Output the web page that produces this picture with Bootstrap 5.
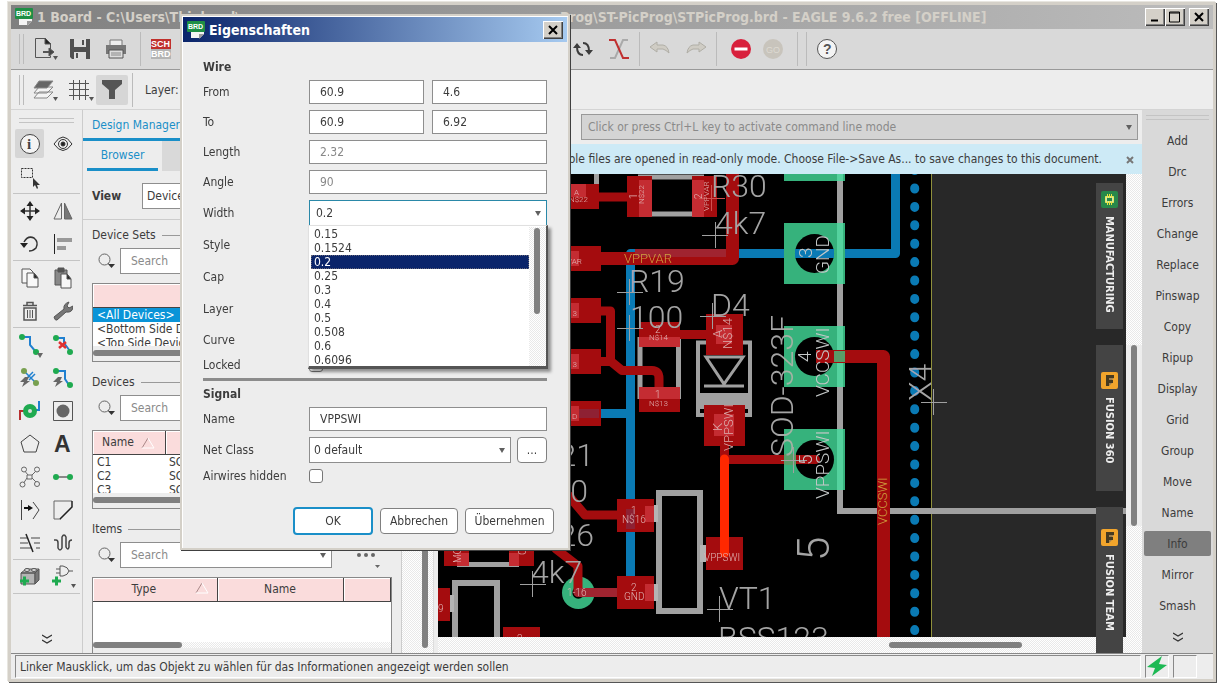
<!DOCTYPE html>
<html lang="de">
<head>
<meta charset="utf-8">
<meta name="viewport" content="width=device-width, initial-scale=1">
<title>1 Board - EAGLE 9.6.2 free</title>
<link href="https://cdn.jsdelivr.net/npm/bootstrap@5.3.0/dist/css/bootstrap.min.css" rel="stylesheet">
<style>
:root{--ui:"DejaVu Sans Condensed","DejaVu Sans","Noto Sans",sans-serif;--face:#ededed;--tone:#d9d9d9;--frame:#d4d0c8;--accent:#1a8fc8}
body{font-family:var(--ui);font-size:12px;line-height:14px;color:#3c3c3c;background:#fff}
button,input,select{font:inherit;color:inherit}
button{padding:0;border:0;background:none}
.screen{height:100vh;min-height:600px;padding:2px 9px 7px 8px}
.win{background:var(--face);border:3px solid var(--frame);box-shadow:1px 1px 0 #555,-1px -1px 0 #e8e6e0}
.caption{height:24px;font-size:14px;font-weight:700;line-height:24px;background:linear-gradient(90deg,#808080,#bcbcbc);color:#d4d0c8;white-space:pre}
.cap-left{width:523px;flex:none;overflow:hidden}
.winbtn{width:20px;height:18px;background:var(--frame);box-shadow:inset 1px 1px #fff,inset -1px -1px #404040,inset -2px -2px #808080;display:grid;place-items:center;flex:none}
.bar1{height:41px;background:var(--tone);border-bottom:1px solid #999}
.bar2{height:40px;border-bottom:1px solid #d4d4d4}
.grip{width:5px;height:30px;border:solid #bbb;border-width:0 1px;flex:none}
.vsep{width:1px;height:34px;background:#bbb;flex:none}
.tb{width:32px;height:30px;flex:none;display:grid;place-items:center}
.on{background:#d6d6d6;border-radius:2px}
.bar-left{width:556px;flex:none;overflow:hidden}
.tools{width:72px;flex:none;border-right:1px solid #ccc}
.grip-h{height:5px;border:solid #c4c4c4;border-width:1px 0;flex:none}
.pair{display:grid;grid-template-columns:33px 33px;grid-auto-rows:33px;border-bottom:1px solid #c4c4c4;margin:0 2px}
.pair button{display:grid;place-items:center}
.pair .on{margin:2px}
.manager{width:355px;flex:none;overflow:hidden}
.tabline{height:31px;border-bottom:3px solid var(--accent);color:var(--accent);padding:8px 9px 0}
.subtabs{height:31px;padding-left:4px}
.subtabs button{width:71px;height:30px}
.subtabs .cur{color:var(--accent);border-bottom:3px solid var(--accent)}
.subtabs .oth{background:var(--tone);color:#777;margin-left:4px;width:70px}
.viewrow{height:48px;border-bottom:1px solid #ccc;padding-left:9px}
.viewrow label{width:50px}
.pick{position:relative;display:block}
.pick select,.field{appearance:none;width:100%;border:1px solid #8e8e8e;border-radius:0;background:#fff;height:24px;padding:0 10px;display:block;outline:0}
.pick select{height:26px;padding:0 20px 0 4px}
.pick:after{content:"";border:solid transparent;border-width:5px 3px 0;border-top-color:#606060;width:0;height:0;position:absolute;right:6px;top:11px}
.groups{width:319px;flex:none;overflow:hidden;border-right:1px solid #ccc}
.siderail{width:32px;flex:none;border-right:1px solid #ddd;padding:3px 5px 5px 20px}
.siderail div{width:6px;height:100%;border-radius:3px;background:#808080}
.group{padding:6px 0 0 9px;height:147px;flex:none}
.legend2{height:18px;margin:0;font-size:12px;font-weight:400;line-height:14px}
.legend2:after{content:"";height:1px;background:#999;width:230px;margin-left:6px}
.seek{height:26px;margin-top:4px}
.seek .field{height:26px;width:212px}
.seek .field::placeholder,.cmd::placeholder{color:#8a8a8a;opacity:1}
.seek .glass{width:28px;padding-left:6px}
.listing{width:300px;height:79px;margin-top:9px;border:1px solid #888;background:var(--face);overflow:hidden}
.listing table{width:298px;table-layout:fixed;border-collapse:collapse;background:#fff;line-height:14px}
.listing th{background:#fadcdc;height:23px;border-right:1px solid #444;border-bottom:1px solid #444;font-weight:400;text-align:center;padding:0;box-shadow:inset 1px 1px #fff}
.listing td{padding:0 4px;height:14px;white-space:nowrap;overflow:hidden}
.listing .blank{height:41px}
.listing .clip{max-height:62px;overflow:hidden;background:#fff}
.w72{width:72px}.w124{width:124px}.w126{width:126px}
.hbar{height:6px;background:#808080;border-radius:3px;width:100%}
.picked{background:#0a94d8;color:#fff}
.center{min-width:0}
.cmdrow{height:34px;padding:4px 4px 0 143px}
.cmdrow .pick{height:26px}
.cmd{width:100%;height:26px;background:#d4d4d4;border:1px solid #999;padding:0 6px;outline:0}
.notice{height:30px;background:#cdeaf6;margin:0}
.hatch{background:repeating-conic-gradient(#fff 0 25%,#e9e9e9 0 50%) 0 0/2px 2px}
.low{min-height:0}
.sheet{min-height:0;min-width:0;background:#000}
.sheet svg{display:block;width:100%;height:100%}
.vscroll{width:16px;flex:none}
.hscroll{height:16px;flex:none}
.docks{position:absolute;right:19px;top:73px;width:27px}
.docks button{width:27px;height:146px;background:#444;color:#eee;writing-mode:vertical-rl;font-size:11px;line-height:27px;font-weight:700;display:flex;align-items:center;gap:8px}
.menu{width:71px;flex:none;background:var(--tone);overflow:hidden;padding-top:1px}
.menu button{height:25px;margin:0 2px;border-radius:2px}
.menu .hot{background:#7f7f7f}
.gap6{gap:6px}
.status{height:26px;border-top:1px solid #888;flex:none;padding:1px 0}
.cell{border:1px solid;border-color:#888 #fff #fff #888}
.cell-end{width:24px}
.dlg{position:absolute;left:180px;top:14px;width:390px;border:2px solid var(--frame);background:var(--face);box-shadow:inset 1px 1px #fff,1px 1px 0 #404040}
.dlg .caption{height:25px;margin:1px;background:linear-gradient(90deg,#0a246a,#a6caf0);color:#fff}
.form-a{display:grid;grid-template-columns:106px 1fr;row-gap:6px;padding:17px 21px 0;align-items:center}
.form-a h2{grid-column:1/3;font-size:12px;font-weight:700;line-height:14px;margin:0}
.form-a hr{grid-column:1/3;height:3px;background:#8c8c8c;border:0;opacity:1;margin:0}
.form-a .field{min-width:0}
.form-a .dim{color:#888}
.form-a .live{border-color:#2a88a8;padding-left:6px}
.tick{appearance:none;width:14px;height:14px;border:1px solid #777;border-radius:3px;background:#fff;margin:0;display:block}
.drop{position:absolute;left:-1px;right:-1px;top:25px;height:144px;z-index:2;background:#fff;border:1px solid #e0e0e0;border-right:2px solid #555;border-bottom:3px solid #555;box-shadow:3px 3px 3px #0006;padding:1px 0 0 2px}
.drop ul{flex:1;margin:0;padding:0;list-style:none}
.drop li{height:14px;padding-left:3px}
.drop .sel{background:#0a246a;color:#fff;outline:1px dotted #667;outline-offset:-1px}
.drop .rail{width:17px;padding:1px 5px}
.drop .rail div{width:6px;height:86px;border-radius:3px;background:#808080}
.acts{gap:7px;padding:24px 14px 13px}
.btn-e{height:26px;width:78px;border:1px solid #808080;border-radius:4px;background:#fff}
.btn-e.ok{height:28px;border:2px solid var(--accent);width:80px}
.btn-e.dots{width:30px}.btn-e.apply{width:89px}
.silk{fill:#a4a4a4;font-family:Roboto,"Liberation Sans",Arial,sans-serif;font-weight:300;font-size:32px}
.over{mix-blend-mode:lighten}
.huge{font-size:44px}
.mid{font-size:19px;fill:#c4c8c8}
.sm{font-size:13px;fill:#dcb0b0}
.xs{font-size:10px;fill:#e0b4b4}
.xxs{font-size:8px;fill:#e0b4b4}
.sig{font-size:13px;fill:#d0a040}
</style>
</head>
<body>
<svg width="0" height="0" class="position-absolute" aria-hidden="true">
<symbol id="brd" viewBox="0 0 18 18"><path d="M4 8h13v5l-4 4H4z" fill="#f4f4f4"/><path d="M12 18v-5h5z" fill="#999"/><rect width="18" height="11" rx="1" fill="#1f8f45"/><text x="1" y="8" font-size="7" font-weight="700" fill="#fff" font-family="Liberation Sans">BRD</text></symbol>
<symbol id="glass" viewBox="0 0 18 16"><circle cx="6.500" cy="6.500" r="5.500" fill="none" stroke="#666"/><path d="M10 10l4 4" stroke="#666"/><path d="M10 11h7l-3.500 4z" fill="#333"/></symbol>
<symbol id="fus" viewBox="0 0 17 17"><rect width="17" height="17" rx="2" fill="#f2a52c"/><path d="M5 14V3h8v3H8v2h4v3H8v3z" fill="#463a20"/><path d="M8 6h5l-2 2H8zM8 11h3l-3 3z" fill="#a08050"/></symbol>
<symbol id="more" viewBox="0 0 10 10"><path d="M0 1l5 3 5-3M0 6l5 3 5-3" fill="none" stroke="#333" stroke-width="1.300"/></symbol>
<symbol id="asc" viewBox="0 0 14 12"><path d="M1 11L7 1" stroke="#a88"/><path d="M7 1l6 10H1" fill="none" stroke="#fff"/></symbol>
</svg>
<main class="screen position-relative">
<div class="win h-100 d-flex flex-column">
 <header class="caption d-flex align-items-center flex-shrink-0 pe-1">
  <svg width="18" height="18" class="mx-1 flex-shrink-0"><use href="#brd"/></svg>
  <span class="cap-left">1 Board - C:\Users\Thinkpad\</span><span class="flex-grow-1 overflow-hidden">Prog\ST-PicProg\STPicProg.brd - EAGLE 9.6.2 free [OFFLINE]</span>
  <button class="winbtn" aria-label="Minimieren"><svg width="12" height="12"><path d="M2 9.500h7" stroke="#000" stroke-width="2"/></svg></button>
  <button class="winbtn" aria-label="Maximieren"><svg width="12" height="12"><path d="M.5 1h10v10H.5zM.5 2h10" fill="none" stroke="#000"/></svg></button>
  <button class="winbtn ms-1" aria-label="Schließen"><svg width="12" height="12"><path d="M2 2l8 8M10 2l-8 8" stroke="#000" stroke-width="2"/></svg></button>
 </header>
 <div class="bar1 d-flex align-items-center flex-shrink-0">
  <div class="bar-left d-flex align-items-center">
   <span class="grip ms-2"></span>
   <button class="tb ms-1" aria-label="Öffnen"><svg width="28" height="26" fill="none" stroke="#555"><path d="M15 2.500H5.500v19h15v-2M20.500 8v5" /><path d="M15 2l6 6h-6z" fill="#222"/><path d="M13 16h7" stroke-width="2"/><path d="M19 12l5 4-5 4z" fill="#444"/><path d="M23 20h5l-2.500 4z" fill="#555" stroke="none"/></svg></button>
   <button class="tb ms-1" aria-label="Speichern"><svg width="22" height="22"><path d="M1 1h20v20H3l-2-2z" fill="#505050"/><path d="M5 1h12v8H5zM5 14h12v7H5z" fill="#ddd"/><path d="M13 2h2v5h-2zM7 15h2v5H7z" fill="#505050"/></svg></button>
   <button class="tb ms-1" aria-label="Drucken"><svg width="22" height="22"><path d="M5 2h12v6H5z" fill="#eee" stroke="#777"/><path d="M1 7h20v9H1z" fill="#777"/><path d="M4 12h14v8H4z" fill="#ddd" stroke="#555"/><path d="M6 15h10M6 17h10" stroke="#888"/></svg></button>
   <span class="vsep ms-2"></span>
   <button class="tb ms-1" aria-label="Schaltplan"><svg width="20" height="20" font-family="Liberation Sans" font-weight="700" font-size="9"><rect width="20" height="10" fill="#c0302c"/><rect width="20" height="10" y="10" fill="#b4b4b4"/><text x="0" y="8" fill="#fff">SCH</text><text x="0" y="18" fill="#fff">BRD</text></svg></button>
  </div>
  <button class="tb" aria-label="Neu zeichnen"><svg width="20" height="18" fill="none" stroke="#3c3c3c" stroke-width="2"><path d="M10 15Q4 15 4 7M10 3q6 0 6 8"/><path d="M0 8l4-5 4 5zM12 10l4 5 4-5z" fill="#3c3c3c" stroke="none"/></svg></button>
  <button class="tb ms-1" aria-label="Ratsnest"><svg width="22" height="22" fill="none" stroke-width="2"><path d="M20 2h-5L7 20H2" stroke="#aaa"/><path d="M1 2h6l8 18h6" stroke="#c03030"/></svg></button>
  <span class="vsep ms-1"></span>
  <button class="tb ms-1" aria-label="Rückgängig"><svg width="22" height="16"><path d="M1 6l7-5v3h6q5 1 6 8-3-3-6-4H8v3z" fill="#cfccc4" stroke="#b0aea6"/></svg></button>
  <button class="tb ms-1" aria-label="Wiederholen"><svg width="22" height="16"><path d="M21 6l-7-5v3H8q-5 1-6 8 3-3 6-4h6v3z" fill="#cfccc4" stroke="#b0aea6"/></svg></button>
  <span class="vsep ms-1"></span>
  <button class="tb ms-2" aria-label="Stopp"><svg width="22" height="22"><circle cx="11" cy="11" r="10" fill="#d8203c"/><path d="M4.500 11h13" stroke="#fff" stroke-width="3"/></svg></button>
  <button class="tb" aria-label="Go"><svg width="22" height="22"><circle cx="11" cy="11" r="10" fill="#c8c4bc"/><text x="4" y="15" font-size="9" fill="#dddad2" font-family="Liberation Sans">GO</text></svg></button>
  <span class="vsep ms-2"></span><span class="vsep ms-2"></span>
  <button class="tb ms-1" aria-label="Hilfe"><svg width="22" height="22"><circle cx="11" cy="11" r="9.500" fill="#f4f4f4" stroke="#555"/><text x="7" y="16" font-size="14" font-weight="700" fill="#555" font-family="Liberation Sans">?</text></svg></button>
 </div>
 <div class="bar2 d-flex align-items-center flex-shrink-0">
  <span class="grip ms-2"></span>
  <button class="tb ms-1" aria-label="Layer"><svg width="28" height="26" fill="#f4f4f4" stroke="#888"><path d="M4 21l5-6h14l-6 6zM4 16l5-6h14l-6 6z"/><path d="M4 11l5-7h14l-6 7z" fill="#666"/><path d="M23 20h5l-2.500 4z" fill="#555" stroke="none"/></svg></button>
  <button class="tb ms-1" aria-label="Raster"><svg width="28" height="26" stroke="#555"><path d="M7.500 3v20M13.500 3v20M19.500 3v20M3 6.500h20M3 12.500h20M3 18.500h20"/><path d="M23 20h5l-2.500 4z" fill="#555" stroke="none"/></svg></button>
  <button class="tb on" aria-label="Filter"><svg width="22" height="20"><path d="M1 0h20v4l-7 6v9H8v-9L1 4z" fill="#555"/></svg></button>
  <span class="vsep ms-1"></span><span class="ms-2 ps-1">Layer:</span>
 </div>
 <div class="low d-flex flex-grow-1">
  <nav class="tools d-flex flex-column overflow-hidden" aria-label="Werkzeuge">
   <div class="grip-h mx-2 mt-2 mb-1"></div>
   <div class="pair">
    <button class="on" aria-label="Info"><svg width="22" height="22"><circle cx="11" cy="11" r="9.500" fill="#f4f4f4" stroke="#444"/><text x="8" y="16" font-size="15" font-weight="700" font-family="Liberation Serif" fill="#444">i</text></svg></button>
    <button aria-label="Zeigen"><svg width="20" height="16" fill="none" stroke="#333"><path d="M1 8q9-14 18 0-9 13-18 0z"/><circle cx="10" cy="8" r="4.500"/><circle cx="10" cy="8" r="2" fill="#222"/></svg></button>
    <button aria-label="Gruppe"><svg width="24" height="24"><path d="M3.500 3.500h11v9h-11z" fill="none" stroke="#333" stroke-dasharray="2 1"/><path d="M15 13v9l2-2 2 4 1-1-1-3h3z" fill="#333"/></svg></button>
    <span></span>
   </div>
   <div class="pair">
    <button aria-label="Verschieben"><svg width="20" height="20"><path d="M10 2v16M2 10h16" stroke="#333" stroke-width="1.500"/><path d="M6.500 5L10 0l3.500 5zM6.500 15l3.500 5 3.500-5zM5 6.500L0 10l5 3.500zM15 6.500l5 3.500-5 3.500z" fill="#222"/></svg></button>
    <button aria-label="Spiegeln"><svg width="20" height="20" stroke="#666"><path d="M8.500 2v16H1z" fill="none"/><path d="M11.500 2v16H19z" fill="#777"/></svg></button>
    <button aria-label="Drehen"><svg width="20" height="20"><path d="M4 8q4-7 10-4 5 4 2 10-3 3-7 3" fill="none" stroke="#333" stroke-width="1.500"/><path d="M0 9h8l-4 5z" fill="#222"/></svg></button>
    <button aria-label="Ausrichten"><svg width="20" height="22"><path d="M1.500 1v20" stroke="#222"/><path d="M4 5h15v4H4zM4 13h9v4H4z" fill="#999"/></svg></button>
   </div>
   <div class="pair">
    <button aria-label="Kopieren"><svg width="20" height="22" fill="#f8f8f8" stroke="#555"><path d="M2 2h8l3 3v11H2z"/><path d="M7 6h7l4 5v9H7z"/><path d="M14 6l4 5h-4z" fill="#222"/></svg></button>
    <button aria-label="Einfügen"><svg width="20" height="22" stroke="#555"><path d="M2 3h12v15H2z" fill="#888"/><path d="M5 1h6v4H5z" fill="#555"/><path d="M8 7h6l4 5v9H8z" fill="#f8f8f8"/><path d="M14 7l4 5h-4z" fill="#222"/></svg></button>
    <button aria-label="Löschen"><svg width="18" height="20" fill="none" stroke="#555"><path d="M2 4.500h14M6 4V1.500h6V4M3 7h12v12H3z" stroke-width="1.500"/><path d="M6.500 9v8M9 9v8M11.500 9v8"/></svg></button>
    <button aria-label="Ändern"><svg width="20" height="20"><path d="M1 16L11 8q-1-5 5-7l-2 4 2 2 4-2q0 7-7 6L4 19q-2 1-3-3z" fill="#777" stroke="#555"/></svg></button>
   </div>
   <div class="pair">
    <button aria-label="Route"><svg width="26" height="26"><path d="M5 5h8v8l6 7" fill="none" stroke="#2080d0" stroke-width="2"/><circle cx="5" cy="5" r="3" fill="#1faa50"/><circle cx="19" cy="20" r="3" fill="#1faa50"/><path d="M20 21h6l-3 5z" fill="#666"/></svg></button>
    <button aria-label="Ripup"><svg width="22" height="22"><path d="M4 4h8v5l6 8" fill="none" stroke="#2080d0" stroke-width="2"/><circle cx="4" cy="4" r="3" fill="#1faa50"/><circle cx="18" cy="18" r="3" fill="#1faa50"/><path d="M7 8l7 6M14 8l-7 6" stroke="#e03030" stroke-width="2.500"/></svg></button>
    <button aria-label="Autoroute"><svg width="22" height="22"><path d="M5 4l12 12M8 11l6-6M10 13l6-6" stroke="#2080d0" stroke-width="1.500"/><circle cx="5" cy="4" r="3" fill="#78a050"/><circle cx="17" cy="16" r="3" fill="#78a050"/><path d="M6 10l4 0-2 4h3l-8 6 2-5H1z" fill="#666"/></svg></button>
    <button aria-label="Fanout"><svg width="22" height="22"><path d="M4 4h9v8l4 6" fill="none" stroke="#2080d0" stroke-width="2"/><circle cx="4" cy="4" r="3" fill="#1faa50"/><circle cx="18" cy="18" r="3" fill="#1faa50"/><path d="M6 10l4 0-2 4h3l-8 6 2-5H1z" fill="#666"/></svg></button>
    <button aria-label="Via"><svg width="22" height="20"><path d="M1 19v-9h6" fill="none" stroke="#b83030" stroke-width="2"/><path d="M20 0v9h-6" fill="none" stroke="#2080d0" stroke-width="2"/><circle cx="11" cy="10" r="4.500" fill="#ddd" stroke="#1faa50" stroke-width="5"/></svg></button>
    <button aria-label="Pad"><svg width="20" height="20"><path d="M.5.5h19v19H.5z" fill="#eee" stroke="#555"/><circle cx="10" cy="10" r="6.500" fill="#666"/></svg></button>
    <button aria-label="Polygon"><svg width="20" height="20"><path d="M10 1l9 7-3 10H4L1 8z" fill="none" stroke="#444"/></svg></button>
    <button aria-label="Text"><svg width="20" height="20"><text x="1" y="18" font-size="23" font-weight="700" fill="#333" font-family="Liberation Sans">A</text></svg></button>
    <button aria-label="Luftlinien"><svg width="22" height="22" fill="#eee" stroke="#666"><path d="M4 18l4-6M5 4l4 5M18 4l-5 5M18 17l-5-5M8 9h5v4H8z"/><circle cx="5" cy="3.500" r="2.500"/><circle cx="18" cy="3.500" r="2.500"/><circle cx="3.500" cy="18.500" r="2.500"/><circle cx="18" cy="18" r="2.500"/></svg></button>
    <button aria-label="Signal"><svg width="20" height="8"><path d="M3 4h14" stroke="#888" stroke-width="2"/><circle cx="3" cy="4" r="3" fill="#1faa50"/><circle cx="17" cy="4" r="3" fill="#1faa50"/></svg></button>
    <button aria-label="Split"><svg width="20" height="20" fill="none" stroke="#444"><path d="M1.500 0v20M13 2l6 8-6 9"/><path d="M4 8h7" stroke="#111" stroke-width="2"/><path d="M8 5l5 3-5 3z" fill="#111" stroke="none"/></svg></button>
    <button aria-label="Miter"><svg width="20" height="20" fill="none"><path d="M19 1H1v18h7" stroke="#666"/><path d="M19 1v6l-12 12" stroke="#222" stroke-width="1.500"/></svg></button>
    <button aria-label="Slice"><svg width="20" height="20" stroke="#999" stroke-width="2"><path d="M0 5h7M11 5h9M0 10h8M14 10h6M0 15h11M16 15h4"/><path d="M6 1l7 18" stroke="#222" stroke-width="1.500"/></svg></button>
    <button aria-label="Meander"><svg width="20" height="20"><path d="M1 7h2q2 0 2 3v5q2 4 4 0V4q2-4 4 0v10q2 4 3 0v-4q0-3 3-3" fill="none" stroke="#444" stroke-width="1.500"/></svg></button>
   </div>
   <div class="pair">
    <button aria-label="Bauteil"><svg width="22" height="20" stroke="#555"><path d="M2 6l5-4h13l-4 4zM2 6h14v11H2z" fill="#b4b4b4"/><path d="M16 6l4-4v11l-4 4z" fill="#777"/><ellipse cx="8" cy="3" rx="2.500" ry="1.500" fill="#ddd"/><ellipse cx="15" cy="3" rx="2.500" ry="1.500" fill="#ddd"/><path d="M1 14h9M5.500 9.500v9" stroke="#1faa50" stroke-width="3"/></svg></button>
    <button aria-label="Gatter"><svg width="28" height="24"><path d="M11 1h3q5 1 6 5-1 4-6 5h-3zM7 4h4M7 8h4M20 6h4" fill="none" stroke="#555"/><path d="M3 16h9M7.500 11.500v9" stroke="#1faa50" stroke-width="3"/><path d="M22 19h5l-2.500 4z" fill="#555"/></svg></button>
   </div>
   <button class="mt-auto mb-2" aria-label="Weitere"><svg width="10" height="10"><use href="#more"/></svg></button>
  </nav>
  <section class="manager d-flex flex-column">
   <div class="tabline flex-shrink-0">Design Manager</div>
   <div class="subtabs d-flex flex-shrink-0"><button class="cur">Browser</button><button class="oth">Filter</button></div>
   <div class="viewrow d-flex align-items-center flex-shrink-0"><label for="view" class="fw-bold">View</label><span class="pick w-50"><select id="view"><option>Devices</option></select></span></div>
   <div class="low d-flex flex-grow-1">
   <div class="groups d-flex flex-column">
    <div class="group">
     <h3 class="legend2 d-flex align-items-center">Device Sets</h3>
     <div class="seek d-flex align-items-center"><span class="glass"><svg width="18" height="16"><use href="#glass"/></svg></span><input class="field" placeholder="Search" aria-label="Device Sets durchsuchen"></div>
     <div class="listing"><div class="clip"><table><thead><tr><th></th></tr></thead><tbody><tr class="picked"><td>&lt;All Devices&gt;</td></tr><tr><td>&lt;Bottom Side Devices&gt;</td></tr><tr><td>&lt;Top Side Devices&gt;</td></tr></tbody></table></div><div class="hbar mt-1"></div></div>
    </div>
    <div class="group">
     <h3 class="legend2 d-flex align-items-center">Devices</h3>
     <div class="seek d-flex align-items-center"><span class="glass"><svg width="18" height="16"><use href="#glass"/></svg></span><input class="field" placeholder="Search" aria-label="Devices durchsuchen"></div>
     <div class="listing"><div class="clip"><table><thead><tr><th class="w72">Name <svg width="14" height="12" class="ms-1"><use href="#asc"/></svg></th><th></th></tr></thead><tbody><tr><td>C1</td><td>SC</td></tr><tr><td>C2</td><td>SC</td></tr><tr><td>C3</td><td>SC</td></tr></tbody></table></div><div class="hbar mt-1"></div></div>
    </div>
    <div class="group">
     <h3 class="legend2 d-flex align-items-center">Items</h3>
     <div class="seek d-flex align-items-center"><span class="glass"><svg width="18" height="16"><use href="#glass"/></svg></span><span class="pick"><input class="field" placeholder="Search" aria-label="Items durchsuchen"></span><button class="ms-4" aria-label="Mehr"><svg width="26" height="26"><g fill="#666"><circle cx="3" cy="13" r="2"/><circle cx="10" cy="13" r="2"/><circle cx="17" cy="13" r="2"/><path d="M19 23h5l-2.500 3z"/></g></svg></button></div>
     <div class="listing"><table><thead><tr><th class="w124"><svg width="14" height="12" class="float-end me-2"><use href="#asc"/></svg>Type</th><th class="w126">Name</th><th></th></tr></thead><tbody><tr><td class="blank"></td><td></td><td></td></tr></tbody></table><div class="hatch"><div class="hbar" style="width:30%"></div></div></div>
    </div>
   </div>
   <div class="siderail hatch"><div></div></div>
   </div>
  </section>
  <section class="center flex-grow-1 d-flex flex-column position-relative">
   <div class="cmdrow flex-shrink-0"><span class="pick"><input class="cmd" placeholder="Click or press Ctrl+L key to activate command line mode" aria-label="Befehlszeile"></span></div>
   <p class="notice d-flex align-items-center justify-content-end flex-shrink-0"><span>Incompatible files are opened in read-only mode. Choose File-&gt;Save As... to save changes to this document.</span><button class="ms-4 me-2" aria-label="Hinweis schließen"><svg width="8" height="8"><path d="M1 1l6 6M7 1L1 7" stroke="#777" stroke-width="2"/></svg></button></p>
   <div class="low d-flex flex-grow-1">
    <div class="sheet flex-grow-1">
<svg viewBox="438 174 688 463" preserveAspectRatio="xMinYMin slice" role="img" aria-label="Platine">
<path d="M932 174h194v463H932z" fill="#282828"/>
<path d="M931.500 174v463" stroke="#90903c"/>
<g fill="none" stroke="#a0a0a0">
<path d="M840 174v337h286" stroke-width="6"/>
<path d="M638 177h66M638 214h66M596.500 174v24M640 337v62M678.500 337v62" stroke-width="5"/>
<path d="M698 342.500h52V415h-52z" stroke-width="4"/><path d="M698 401h52" stroke-width="16"/>
<path d="M706 357h37l-19 27zM704 386h40" stroke-width="3"/>
<path d="M659 493h41v118h-41zM455 640v-57h42v57" stroke-width="6"/><path d="M457 564.500h62" stroke-width="5"/>
</g>
<g fill="none" stroke="#0a7ab4" stroke-width="9" stroke-linejoin="round"><path d="M630.500 577V253.500H895.500V174M601 413.500h29"/><path d="M914.700 169.600V637" stroke-linecap="round" stroke-dasharray="1 17.400"/></g>
<g fill="#36b27c"><path d="M784 174h61v7h-61zM784 223h61v61h-61zM784 326h61v61h-61zM784 429h61v61h-61z"/><circle cx="578.300" cy="592.700" r="16.300"/></g>
<path d="M840 174v7M840 223v61M840 326v61M840 429v61" stroke="#54d29e" stroke-width="6"/>
<g><circle cx="814.500" cy="253.500" r="19.500"/><circle cx="814.500" cy="356.500" r="19.500"/><circle cx="814.500" cy="459.500" r="19.500"/><circle cx="578.300" cy="592.700" r="6"/></g>
<path d="M795 253.500h39" stroke="#0a7ab4" stroke-width="9"/>
<g fill="none" stroke="#a40c0e" stroke-linejoin="round"><path d="M601 258.500h131.500V174M883.500 637V356.500H816" stroke-width="13"/>
<path d="M599 197h28M680 334.500h26M601 311h9.500v50M601 361.500h10l11 9h30q7 0 7 8v12M724.500 446v14M724.500 459.500h91M568 495l17 20h32M556 549l22 17v26" stroke-width="9" stroke-linecap="round"/></g>
<path d="M834 356.500h11M784 459.500h12" stroke="#5a9c68" stroke-width="11"/>
<path d="M635 253h91" stroke="#a02430" stroke-width="8"/><path d="M578 592.500h40" stroke="#a02430" stroke-width="9" stroke-linecap="round"/>
<g fill="#a40c0e"><path d="M570 184h29v25h-29zM627 176h25v41h-25zM692 176h25v41h-25zM570 246h31v25h-31zM570 298h31v25h-31zM570 349h31v25h-31zM570 401h31v25h-31zM639 322h41v25h-41zM639 387h41v25h-41zM706 314h37v41h-37zM704 405h41v41h-41zM617 499h37v33h-37zM617 576h37v33h-37zM706 537h37v33h-37zM444 540h25v26h-25zM509 540h25v26h-25zM438 588h12v33h-12zM503 627h37v10h-37z"/></g>
<g fill="#c42c32"><path d="M570 184h16v13h-16zM639 180h13v37h-13zM692 180h12v37h-12zM570 251h9v15h-9zM570 303h9v15h-9zM570 354h9v15h-9zM570 406h9v15h-9zM639 337h41v10h-41zM639 387h41v12h-41zM716 325h16v19h-16zM714 414h20v22h-20zM645 506h9v16h-9zM645 584h9v17h-9zM457 553h12v13h-12zM509 553h10v13h-10z"/></g>
<g fill="#b4b4b4"><path d="M654 505h4v17h-4zM654 584h4v17h-4zM700 545h6v17h-6zM450 595h4v17h-4z"/></g>
<path d="M626 509h9v20h-9zM579 409h20v9h-20z" fill="#80304c" opacity=".6"/>
<g stroke="#a0a0a0" fill="none"><path d="M702 235.500h26M715.500 222v26M617 292.500h26M629.500 279v26M617 328.500h26M629.500 315v26M700 316.500h26M712.500 303v26M520 584.500h26M532.500 571v26M707 609.500h26M719.500 596v26M781 460.500h26M793.500 447v26M921 402.500h26M933.500 389v26"/><path d="M699 198.500h26M711.500 185v26" stroke="#d05050"/></g>
<g class="silk over"><text x="629" y="292">R19</text><text x="630" y="328">100</text><text x="711" y="197">R30</text><text x="715" y="234">4k7</text><text x="711" y="316">D4</text><text x="594" y="466" text-anchor="end">R21</text><text x="588" y="502" text-anchor="end">100</text><text x="594" y="546" text-anchor="end">R26</text><text x="531" y="583">4k7</text><text x="719" y="609">VT1</text><text x="718" y="649">BSS123</text>
<text transform="translate(793 457) rotate(-90)">SOD-323F</text><text transform="translate(829 561) rotate(-90)" class="huge">5</text><text transform="translate(931 401) rotate(-90)">X4</text></g>
<path d="M724.500 459v94" stroke="#ff2800" stroke-width="9" stroke-linecap="round"/>
<g class="silk">
<text class="mid" transform="translate(829 274) rotate(-90)">GND</text><text class="mid" transform="translate(812 258) rotate(-90)">3</text>
<text class="mid" transform="translate(829 397) rotate(-90)">VCCSWI</text><text class="mid" transform="translate(811 362) rotate(-90)">4</text>
<text class="mid" transform="translate(829 499) rotate(-90)">VPPSWI</text><text class="mid" transform="translate(812 465) rotate(-90)">5</text>
<text class="sig" x="624" y="263">VPPVAR</text><text class="sig" transform="translate(887 525) rotate(-90)">VCCSWI</text>
<text class="sm" transform="translate(732 349) rotate(-90)">N$14</text><text class="sm" transform="translate(722 338) rotate(-90)">A</text>
<text class="sm" transform="translate(733 451) rotate(-90)">VPPSWI</text><text class="sm" transform="translate(722 431) rotate(-90)">K</text>
<text class="xs" x="622" y="523">N$16</text><text class="xs" x="631" y="514">1</text><text class="xs" x="624" y="600">GND</text><text class="xs" x="631" y="591">2</text><text class="xs" x="704" y="561">VPPSWI</text><text class="xs" x="567" y="596">1-16</text>
<text class="xxs" x="649" y="340">N$14</text><text class="xs" x="655" y="333">2</text><text class="xxs" x="649" y="406">N$13</text><text class="xs" x="655" y="398">1</text><text class="xxs" x="569" y="202">N$22</text><text class="xxs" x="574" y="195">A</text><text class="xxs" x="567" y="264">VAR</text><text class="xxs" x="568" y="316">13</text><text class="xxs" x="568" y="367">13</text><text class="xxs" x="572" y="419">D</text><text class="xs" x="438" y="612">9</text><text class="xs" x="517" y="642">2</text>
<text class="xxs" transform="translate(644 204) rotate(-90)">N$22</text><text class="xs" transform="translate(637 199) rotate(-90)">1</text><text class="xxs" transform="translate(709 211) rotate(-90)">VPPVAR</text><text class="xs" transform="translate(702 199) rotate(-90)">2</text><text class="xs" transform="translate(461 563) rotate(-90)">MO</text><text class="xs" transform="translate(526 555) rotate(-90)">C</text></g>
</svg>
    </div>
    <div class="vscroll hatch d-flex flex-column align-items-center"><div style="height:37%"></div><div class="w-100 d-flex justify-content-center" style="height:39%;background:#ededed"><div class="hbar h-100" style="width:6px"></div></div></div>
   </div>
   <div class="hscroll hatch d-flex align-items-center"><div style="width:64%"></div><div class="hbar" style="width:19%"></div></div>
   <div class="docks d-flex flex-column gap-3">
    <button class="pt-2"><svg width="17" height="17"><rect width="17" height="17" rx="2" fill="#28884a"/><path d="M4.500 5.500h8v6h-8z" fill="#cfe8b0" stroke="#e8e860"/><path d="M6.500 3v11M8.500 3v11M10.500 3v11" stroke="#e8e040"/><path d="M6 7h5v3H6z" fill="#28884a"/></svg>MANUFACTURING</button>
    <button class="justify-content-center"><svg width="17" height="17"><use href="#fus"/></svg>FUSION 360</button>
    <button class="justify-content-center"><svg width="17" height="17"><use href="#fus"/></svg>FUSION TEAM</button>
   </div>
  </section>
  <nav class="menu d-flex flex-column" aria-label="Befehle">
   <div class="grip-h mx-1 mt-1 mb-2"></div>
   <div class="d-flex flex-column gap6">
   <button>Add</button><button>Drc</button><button>Errors</button><button>Change</button><button>Replace</button><button>Pinswap</button><button>Copy</button><button>Ripup</button><button>Display</button><button>Grid</button><button>Group</button><button>Move</button><button>Name</button><button class="hot">Info</button><button>Mirror</button><button>Smash</button>
   <button aria-label="Weitere Befehle"><svg width="10" height="10"><use href="#more"/></svg></button></div>
  </nav>
 </div>
 <footer class="status d-flex gap-1">
  <div class="cell flex-grow-1 d-flex align-items-center ps-1 ms-1">Linker Mausklick, um das Objekt zu wählen für das Informationen angezeigt werden sollen</div>
  <div class="cell"><svg width="22" height="20" class="d-block"><path d="M16 0L1 11l8 1-3 8 15-11-8-1z" fill="#1db954"/></svg></div>
  <div class="cell cell-end me-3"></div>
 </footer>
</div>
<div class="dlg" role="dialog" aria-labelledby="dt">
 <header class="caption d-flex align-items-center px-1"><svg width="18" height="18"><use href="#brd"/></svg><span id="dt" class="ms-1 flex-grow-1">Eigenschaften</span><button class="winbtn" aria-label="Dialog schließen"><svg width="12" height="12"><path d="M2 2l8 8M10 2l-8 8" stroke="#000" stroke-width="2"/></svg></button></header>
 <form class="form-a">
  <h2>Wire</h2>
  <label for="fx">From</label><div class="d-flex gap-2"><input class="field" id="fx" value="60.9"><input class="field" aria-label="From Y" value="4.6"></div>
  <label for="tx">To</label><div class="d-flex gap-2"><input class="field" id="tx" value="60.9"><input class="field" aria-label="To Y" value="6.92"></div>
  <label for="len">Length</label><input class="field dim" id="len" value="2.32" readonly>
  <label for="ang">Angle</label><input class="field dim" id="ang" value="90" readonly>
  <label for="wid">Width</label><div class="pick"><select id="wid" class="live"><option>0.2</option></select>
   <div class="drop d-flex"><ul role="listbox" aria-label="Width"><li>0.15</li><li>0.1524</li><li class="sel">0.2</li><li>0.25</li><li>0.3</li><li>0.4</li><li>0.5</li><li>0.508</li><li>0.6</li><li>0.6096</li></ul><div class="rail hatch"><div></div></div></div></div>
  <label for="sty">Style</label><div class="pick"><select id="sty"></select></div>
  <label for="cap">Cap</label><div class="pick"><select id="cap"></select></div>
  <label for="lay">Layer</label><div class="pick"><select id="lay"></select></div>
  <label for="cur">Curve</label><input class="field" id="cur">
  <label for="loc">Locked</label><input class="tick" type="checkbox" id="loc">
  <hr>
  <h2>Signal</h2>
  <label for="nam">Name</label><input class="field" id="nam" value="VPPSWI">
  <label for="net">Net Class</label><div class="d-flex gap6"><div class="pick flex-grow-1"><select id="net"><option>0 default</option></select></div><button type="button" class="btn-e dots">...</button></div>
  <label for="air">Airwires hidden</label><input class="tick" type="checkbox" id="air">
 </form>
 <div class="acts d-flex justify-content-end align-items-center"><button class="btn-e ok">OK</button><button class="btn-e">Abbrechen</button><button class="btn-e apply">Übernehmen</button></div>
</div>
</main>
<script src="https://cdn.jsdelivr.net/npm/bootstrap@5.3.0/dist/js/bootstrap.bundle.min.js"></script>
</body>
</html>
